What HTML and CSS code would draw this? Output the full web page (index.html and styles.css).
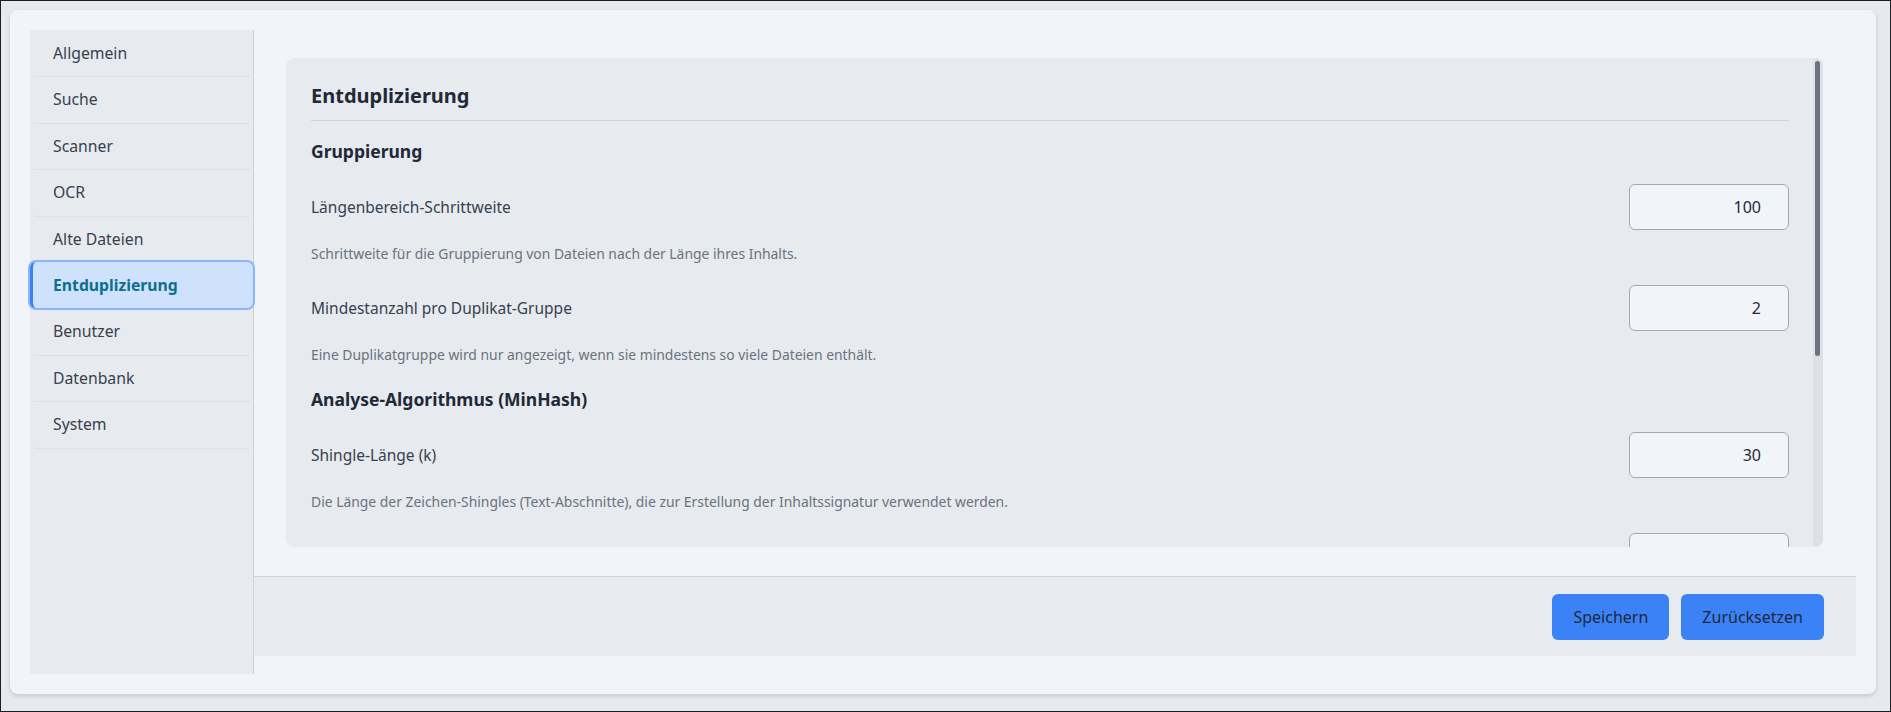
FILE: index.html
```html
<!DOCTYPE html>
<html lang="de">
<head>
<meta charset="utf-8">
<title>Einstellungen</title>
<link rel="stylesheet" href="styles.css">
</head>
<body>
<div class="card">
  <nav class="sidebar">
    <a class="nav-item">Allgemein</a>
    <a class="nav-item">Suche</a>
    <a class="nav-item">Scanner</a>
    <a class="nav-item">OCR</a>
    <a class="nav-item">Alte Dateien</a>
    <a class="nav-item active">Entduplizierung</a>
    <a class="nav-item">Benutzer</a>
    <a class="nav-item">Datenbank</a>
    <a class="nav-item">System</a>
  </nav>
  <div class="main">
    <div class="content">
      <div class="panel">
        <div class="panel-body">
          <h2 class="panel-title">Entduplizierung</h2>
          <section class="group">
            <h3 class="group-title">Gruppierung</h3>
            <div class="setting">
              <div class="setting-row">
                <label class="setting-label">Längenbereich-Schrittweite</label>
                <input class="num" type="text" value="100">
              </div>
              <p class="setting-desc">Schrittweite für die Gruppierung von Dateien nach der Länge ihres Inhalts.</p>
            </div>
            <div class="setting">
              <div class="setting-row">
                <label class="setting-label">Mindestanzahl pro Duplikat-Gruppe</label>
                <input class="num" type="text" value="2">
              </div>
              <p class="setting-desc">Eine Duplikatgruppe wird nur angezeigt, wenn sie mindestens so viele Dateien enthält.</p>
            </div>
          </section>
          <section class="group">
            <h3 class="group-title">Analyse-Algorithmus (MinHash)</h3>
            <div class="setting">
              <div class="setting-row">
                <label class="setting-label">Shingle-Länge (k)</label>
                <input class="num" type="text" value="30">
              </div>
              <p class="setting-desc">Die Länge der Zeichen-Shingles (Text-Abschnitte), die zur Erstellung der Inhaltssignatur verwendet werden.</p>
            </div>
            <div class="setting">
              <div class="setting-row">
                <span class="setting-label"></span>
                <input class="num" type="text" value="">
              </div>
            </div>
          </section>
        </div>
        <div class="scrollbar"><div class="scrollbar-thumb"></div></div>
      </div>
    </div>
    <div class="footer">
      <button class="btn">Speichern</button>
      <button class="btn">Zurücksetzen</button>
    </div>
  </div>
</div>
</body>
</html>
```

FILE: styles.css
```css
* { box-sizing: border-box; }

html, body {
  margin: 0;
  height: 100%;
}

body {
  height: 712px;
  border: 1px solid #1b1f24;
  background: #e6e9ed;
  padding: 9px 14px 16px 9px;
  font-family: "Noto Sans", "Open Sans", sans-serif;
  overflow: hidden;
}

.card {
  height: 684px;
  background: #f1f5f9;
  border-radius: 8px;
  box-shadow: 0 2px 4px rgba(15, 23, 42, 0.15);
  padding: 20px;
  display: flex;
  align-items: stretch;
}

.sidebar {
  width: 224px;
  flex: none;
  background: #e7eaee;
  border-right: 1px solid #cdd2d8;
  display: flex;
  flex-direction: column;
}

.nav-item {
  display: block;
  height: 46.4px;
  padding: 12px 20px;
  border-left: 3px solid transparent;
  font-size: 15.75px;
  line-height: 22.4px;
  color: #374151;
  border-radius: 6px;
  box-shadow: 0 2px 1px -1px rgba(0, 0, 0, 0.05);
  cursor: pointer;
}

.nav-item.active {
  background: #cfe2fd;
  border-left-color: #3b82f6;
  box-shadow: 0 0 0 2px #8db6f7;
  color: #0e6f8c;
  font-weight: 700;
}

.main {
  flex: 1;
  display: flex;
  flex-direction: column;
  align-self: flex-start;
}

.content {
  height: 546px;
  padding: 28px 33px 29px 32px;
}

.panel {
  height: 100%;
  background: #e7eaee;
  border-radius: 8px;
  overflow: hidden;
  display: flex;
}

.panel-body {
  flex: 1;
  min-width: 0;
  overflow: hidden;
  padding: 24px 24px 0 25px;
}

.scrollbar {
  flex: none;
  width: 10px;
  background: #dde1e7;
  border-radius: 6px;
  padding: 3px 3px 0 2px;
}

.scrollbar-thumb {
  width: 5px;
  height: 295px;
  background: #6b7280;
  border-radius: 3px;
}

.panel-title {
  margin: 0 0 17px;
  font-size: 20px;
  line-height: 28px;
  font-weight: 700;
  color: #1f2937;
  padding-bottom: 10px;
  border-bottom: 1px solid #cfd4da;
}

.group + .group {
  margin-top: 6px;
}

.group-title {
  margin: 0 0 20px;
  font-size: 17.5px;
  line-height: 26px;
  font-weight: 700;
  color: #1f2937;
}

.setting {
  margin-bottom: 21px;
}

.setting-row {
  display: flex;
  align-items: center;
  justify-content: space-between;
}

.setting-label {
  font-size: 15.5px;
  color: #374151;
}

.num {
  width: 160px;
  height: 46px;
  border: 1px solid #a1a8b3;
  border-radius: 6px;
  background: #f1f5f9;
  text-align: right;
  padding: 0 27px 0 12px;
  font-family: "Noto Sans", sans-serif;
  font-size: 16px;
  color: #1f2937;
}

.setting-desc {
  margin: 14px 0 0;
  font-size: 13.9px;
  line-height: 20px;
  color: #6b7280;
}

.footer {
  height: 80px;
  border-top: 1px solid #cdd2d8;
  background: #e7eaee;
  display: flex;
  justify-content: flex-end;
  align-items: center;
  gap: 12px;
  padding: 0 32px;
}

.btn {
  height: 46px;
  padding: 0 21px;
  border: none;
  border-radius: 6px;
  background: #3b82f6;
  color: #1e293b;
  font-family: "Noto Sans", sans-serif;
  font-size: 16px;
  cursor: pointer;
}
```
